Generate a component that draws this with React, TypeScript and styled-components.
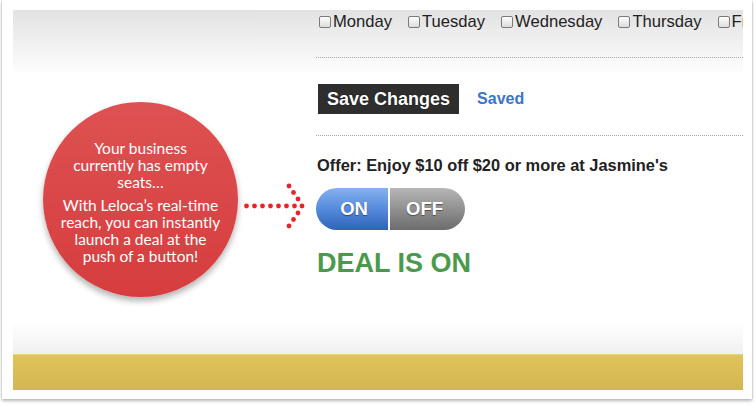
import React from "react";
import styled, { createGlobalStyle } from "styled-components";

const Global = createGlobalStyle`
  html, body { margin: 0; padding: 0; background: #fff; }
  body { width: 756px; height: 407px; overflow: hidden; font-family: "Liberation Sans", Arial, Helvetica, sans-serif; }
`;

const Page = styled.div`
  width: 756px;
  height: 407px;
  background: #fff;
  padding: 0 4px 0 2px;
  box-sizing: border-box;
`;

const Card = styled.div`
  width: 750px;
  height: 399px;
  background: #fff;
  box-shadow: 0 2px 3px rgba(0, 0, 0, 0.28), -1px 0 1px rgba(0, 0, 0, 0.06), 1px 0 1px rgba(0, 0, 0, 0.06);
  padding: 10px 9px 9px 11px;
  box-sizing: border-box;
  display: flex;
  flex-direction: column;
`;

const Main = styled.div`
  flex: 1;
  display: grid;
  grid-template-columns: 303px 1fr;
  background: linear-gradient(to bottom, #e2e2e2 0px, #ffffff 66px, #ffffff 312px, #f0f0f0 345px);
  overflow: hidden;
`;

const Footer = styled.div`
  height: 35px;
  border-top: 1px solid #e9d378;
  background: linear-gradient(to bottom, #e0c45a, #d2b651);
`;

const Left = styled.div`
  display: flex;
  align-items: flex-start;
  padding: 92px 0 0 30px;
`;

const Bubble = styled.div`
  width: 195px;
  height: 195px;
  border-radius: 50%;
  background: linear-gradient(to bottom, #de5152, #d63d3e);
  box-shadow: 0 4px 6px rgba(0, 0, 0, 0.3);
  display: flex;
  flex-direction: column;
  align-items: center;
  justify-content: center;
  color: #fff;
  font-family: Lato, "Open Sans", sans-serif;
  font-size: 15.5px;
  line-height: 17px;
  text-align: center;
  padding: 5px 8px 0;
  box-sizing: border-box;
  flex-shrink: 0;
`;

const BubbleText = styled.p<{ $gap?: number }>`
  margin: ${(p) => p.$gap ?? 0}px 0 0;
  white-space: nowrap;
`;

const Arrow = styled.svg`
  margin: 81px 0 0 6px;
  flex-shrink: 0;
`;

const Right = styled.div`
  display: flex;
  flex-direction: column;
  padding-left: 3px;
  min-width: 0;
`;

const Days = styled.div`
  height: 48px;
  display: flex;
  align-items: flex-start;
  padding-top: 2px;
  box-sizing: border-box;
  white-space: nowrap;
  overflow: hidden;
  border-bottom: 1px dotted #a8a8a8;
  margin-left: -3px;
  padding-left: 3px;
`;

const Day = styled.label`
  display: flex;
  align-items: center;
  font-size: 16.6px;
  line-height: 19px;
  color: #222;
  margin-right: 16px;
  flex-shrink: 0;
`;

const Box = styled.span`
  width: 10px;
  height: 10px;
  border: 1px solid #7a7a7a;
  border-radius: 2px;
  background: linear-gradient(to bottom, #fdfdfd, #dcdcdc);
  margin-right: 2px;
  margin-top: 1px;
`;

const SaveRow = styled.div`
  display: flex;
  align-items: center;
  gap: 18px;
  padding: 26px 0 21px 2px;
  border-bottom: 1px dotted #a8a8a8;
  margin-left: -3px;
  padding-left: 2px;
`;

const SaveButton = styled.button`
  height: 30px;
  padding: 0 9px;
  border: none;
  border-radius: 0;
  background: #2e2e2e;
  color: #fff;
  font-family: "Liberation Sans", Arial, sans-serif;
  font-weight: bold;
  font-size: 18px;
  text-shadow: 0 0 1px #000;
`;

const Saved = styled.span`
  color: #3975c8;
  font-weight: bold;
  font-size: 16px;
`;

const Offer = styled.div`
  margin-top: 20px;
  font-weight: bold;
  font-size: 16.4px;
  line-height: 19px;
  color: #222;
  margin-left: -2px;
`;

const Toggle = styled.div`
  display: flex;
  width: 149px;
  height: 42px;
  margin-top: 13px;
  margin-left: -3px;
  border-radius: 21px;
  overflow: hidden;
  gap: 2px;
  background: #fff;
`;

const ToggleHalf = styled.div<{ $on?: boolean }>`
  flex: ${(p) => (p.$on ? "0 0 68px" : "1")};
  display: flex;
  align-items: center;
  justify-content: center;
  padding: ${(p) => (p.$on ? "0 0 0 4px" : "0 6px 0 0")};
  color: #fff;
  font-weight: bold;
  font-size: 18.5px;
  text-shadow: 0 1px 1px rgba(0, 0, 0, 0.45);
  background: ${(p) =>
    p.$on
      ? "linear-gradient(to bottom, #86b1ee 0%, #5a8ede 45%, #2f63b9 100%)"
      : "linear-gradient(to bottom, #b6b6b6 0%, #949494 45%, #6c6c6c 100%)"};
`;

const DealStatus = styled.div`
  margin-top: 17px;
  margin-left: -2px;
  color: #4b9a4c;
  font-weight: bold;
  font-size: 27px;
  line-height: 32px;
`;

const days = ["Monday", "Tuesday", "Wednesday", "Thursday", "Friday"];

const dots: [number, number][] = [
  [1.5, 22], [9.5, 22], [17.5, 22], [25.5, 22], [33.5, 22], [41.5, 22], [49.5, 22], [57, 22],
  [44, 2], [48.5, 8.5], [53, 15], [53, 29], [48.5, 35.5], [44, 42],
];

export default function App() {
  return (
    <>
      <Global />
      <Page>
        <Card>
          <Main>
            <Left>
              <Bubble>
                <BubbleText>Your business</BubbleText>
                <BubbleText>currently has empty</BubbleText>
                <BubbleText>seats…</BubbleText>
                <BubbleText $gap={6}>With Leloca’s real-time</BubbleText>
                <BubbleText>reach, you can instantly</BubbleText>
                <BubbleText>launch a deal at the</BubbleText>
                <BubbleText>push of a button!</BubbleText>
              </Bubble>
              <Arrow width="62" height="46" viewBox="0 0 62 46">
                {dots.map(([x, y], i) => (
                  <circle key={i} cx={x + 1} cy={y + 1} r={2.4} fill="#e8232a" />
                ))}
              </Arrow>
            </Left>
            <Right>
              <Days>
                {days.map((d) => (
                  <Day key={d}>
                    <Box />
                    {d}
                  </Day>
                ))}
              </Days>
              <SaveRow>
                <SaveButton>Save Changes</SaveButton>
                <Saved>Saved</Saved>
              </SaveRow>
              <Offer>Offer: Enjoy $10 off $20 or more at Jasmine's</Offer>
              <Toggle>
                <ToggleHalf $on>ON</ToggleHalf>
                <ToggleHalf>OFF</ToggleHalf>
              </Toggle>
              <DealStatus>DEAL IS ON</DealStatus>
            </Right>
          </Main>
          <Footer />
        </Card>
      </Page>
    </>
  );
}
